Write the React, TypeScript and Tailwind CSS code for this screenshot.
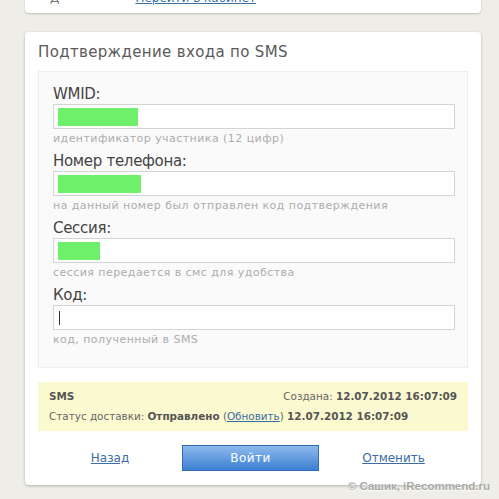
import React from "react";

// SMS login confirmation form, shown as a card on a beige page with a
// leftover card peeking in at the top.

type Field = {
  label: string;
  hint: string;
  filled: number | null; // width of the green redaction block, null = empty field
  cursor?: boolean;
};

const FIELDS: Field[] = [
  { label: "WMID:", hint: "идентификатор участника (12 цифр)", filled: 80 },
  { label: "Номер телефона:", hint: "на данный номер был отправлен код подтверждения", filled: 83 },
  { label: "Сессия:", hint: "сессия передается в смс для удобства", filled: 42 },
  { label: "Код:", hint: "код, полученный в SMS", filled: null, cursor: true },
];

function FormField({ field }: { field: Field }) {
  return (
    <div className="flex flex-col">
      <label className="text-[15px] leading-[18px] tracking-[-0.3px] text-[#444]">{field.label}</label>
      <div className="mt-[1px] flex h-[25px] items-center border border-[#d4d4d4] bg-white px-[4px]">
        {field.filled !== null && (
          <span className="h-[18px] bg-[#6ef06a]" style={{ width: field.filled }} />
        )}
        {field.cursor && <span className="ml-[1px] h-[14px] w-px bg-[#333]" />}
      </div>
      <span className="mt-[3px] text-[11px] leading-[14px] tracking-[0.45px] text-[#adadad]">
        {field.hint}
      </span>
    </div>
  );
}

export default function App() {
  return (
    <div
      className="relative h-[499px] w-[499px] overflow-hidden bg-[#eeede7]"
      style={{ fontFamily: '"DejaVu Sans", Verdana, sans-serif' }}
    >
      {/* bottom edge of the previous card */}
      <div className="ml-[25px] mr-[18px] h-[13px] overflow-hidden rounded-b-[4px] bg-white shadow-[0_1px_2px_rgba(0,0,0,0.2)]">
        <div className="-mt-[9px] flex gap-[76px] pl-[25px] text-[12px] leading-[14px] text-[#777]">
          <span>Д</span>
          <span className="text-[#3a6ea5] underline">Перейти в кабинет</span>
        </div>
      </div>

      <div className="ml-[25px] mr-[18px] mt-[19px] rounded-[4px] bg-white px-[13px] pb-[14px] pt-[10px] shadow-[0_1px_3px_rgba(0,0,0,0.25)]">
        <h2 className="text-[15px] leading-[20px] tracking-[0.35px] text-[#5a5a5a]">Подтверждение входа по SMS</h2>

        <div className="mt-[9px] flex flex-col gap-[6px] border border-[#eeeeee] bg-[#fafafa] pb-[20px] pl-[14px] pr-[12px] pt-[13px]">
          {FIELDS.map((f) => (
            <FormField key={f.label} field={f} />
          ))}
        </div>

        <div className="mt-[14px] flex flex-col gap-[6px] bg-[#fbf9d0] px-[11px] pb-[8px] pt-[7px] text-[10.4px] leading-[14px] text-[#666]">
          <div className="flex items-baseline justify-between">
            <span className="font-bold text-[#555]">SMS</span>
            <span>
              Создана: <b className="text-[#555]">12.07.2012 16:07:09</b>
            </span>
          </div>
          <div>
            Статус доставки: <b className="text-[#555]">Отправлено</b> (
            <span className="text-[#3a6ea5] underline">Обновить</span>){" "}
            <b className="text-[#555]">12.07.2012 16:07:09</b>
          </div>
        </div>

        <div className="mt-[14px] flex items-center text-[12px]">
          <div className="flex w-[144px] justify-center">
            <span className="text-[#3a6ea5] underline">Назад</span>
          </div>
          <button
            type="button"
            className="h-[26px] w-[137px] border border-[#2f6db5] bg-gradient-to-b from-[#8db9ec] to-[#3b80d1] text-[12px] tracking-[0.5px] text-white"
          >
            Войти
          </button>
          <div className="flex flex-1 justify-center">
            <span className="text-[#3a6ea5] underline">Отменить</span>
          </div>
        </div>
      </div>

      <span
        className="absolute bottom-[4px] right-[9px] text-[11.5px] font-bold text-[#a9a9a6] [text-shadow:0_1px_1px_#fff]"
        style={{ fontFamily: '"Liberation Sans", Arial, sans-serif' }}
      >
        © Сашик, iRecommend.ru
      </span>
    </div>
  );
}
